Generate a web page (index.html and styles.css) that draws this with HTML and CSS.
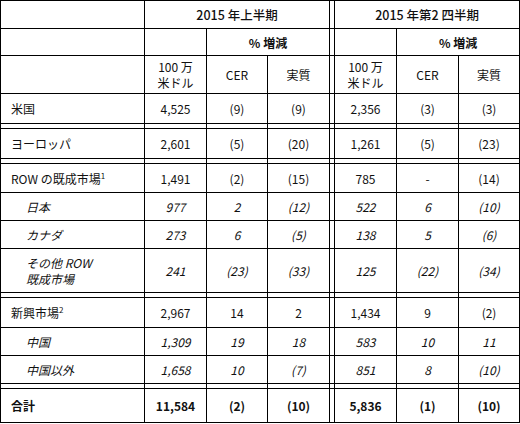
FILE: index.html
```html
<!DOCTYPE html>
<html>
<head>
    <title>2015 地域別売上</title>
    <link rel="stylesheet" href="styles.css">
</head>
<body>
    <table class="sales">
        <colgroup>
            <col class="c-label">
            <col class="c-num"><col class="c-num2"><col class="c-num">
            <col class="c-gap">
            <col class="c-num"><col class="c-num"><col class="c-num2">
        </colgroup>
        <tr class="h1">
            <td></td>
            <td colspan="3" class="period">2015 年上半期</td>
            <td class="gap"></td>
            <td colspan="3" class="period">2015 年第2 四半期</td>
        </tr>
        <tr class="h2">
            <td></td>
            <td></td>
            <td colspan="2" class="bold">% 増減</td>
            <td class="gap"></td>
            <td></td>
            <td colspan="2" class="bold">% 増減</td>
        </tr>
        <tr class="h3">
            <td></td>
            <td class="two-line">100 万<br>米ドル</td>
            <td>CER</td>
            <td>実質</td>
            <td class="gap"></td>
            <td class="two-line">100 万<br>米ドル</td>
            <td>CER</td>
            <td>実質</td>
        </tr>
        <tr class="row">
            <td class="label">米国</td>
            <td>4,525</td><td>(9)</td><td>(9)</td>
            <td class="gap"></td>
            <td>2,356</td><td>(3)</td><td>(3)</td>
        </tr>
        <tr class="spacer"><td></td><td></td><td></td><td></td><td class="gap"></td><td></td><td></td><td></td></tr>
        <tr class="row">
            <td class="label">ヨーロッパ</td>
            <td>2,601</td><td>(5)</td><td>(20)</td>
            <td class="gap"></td>
            <td>1,261</td><td>(5)</td><td>(23)</td>
        </tr>
        <tr class="spacer"><td></td><td></td><td></td><td></td><td class="gap"></td><td></td><td></td><td></td></tr>
        <tr class="row row-29">
            <td class="label">ROW の既成市場<sup>1</sup></td>
            <td>1,491</td><td>(2)</td><td>(15)</td>
            <td class="gap"></td>
            <td>785</td><td>-</td><td>(14)</td>
        </tr>
        <tr class="row sub">
            <td class="label">日本</td>
            <td>977</td><td>2</td><td>(12)</td>
            <td class="gap"></td>
            <td>522</td><td>6</td><td>(10)</td>
        </tr>
        <tr class="row sub">
            <td class="label">カナダ</td>
            <td>273</td><td>6</td><td>(5)</td>
            <td class="gap"></td>
            <td>138</td><td>5</td><td>(6)</td>
        </tr>
        <tr class="row sub tall">
            <td class="label two-line">その他 ROW<br>既成市場</td>
            <td>241</td><td>(23)</td><td>(33)</td>
            <td class="gap"></td>
            <td>125</td><td>(22)</td><td>(34)</td>
        </tr>
        <tr class="spacer"><td></td><td></td><td></td><td></td><td class="gap"></td><td></td><td></td><td></td></tr>
        <tr class="row">
            <td class="label">新興市場<sup>2</sup></td>
            <td>2,967</td><td>14</td><td>2</td>
            <td class="gap"></td>
            <td>1,434</td><td>9</td><td>(2)</td>
        </tr>
        <tr class="row sub">
            <td class="label">中国</td>
            <td>1,309</td><td>19</td><td>18</td>
            <td class="gap"></td>
            <td>583</td><td>10</td><td>11</td>
        </tr>
        <tr class="row sub">
            <td class="label">中国以外</td>
            <td>1,658</td><td>10</td><td>(7)</td>
            <td class="gap"></td>
            <td>851</td><td>8</td><td>(10)</td>
        </tr>
        <tr class="spacer"><td></td><td></td><td></td><td></td><td class="gap"></td><td></td><td></td><td></td></tr>
        <tr class="row total">
            <td class="label">合計</td>
            <td>11,584</td><td>(2)</td><td>(10)</td>
            <td class="gap"></td>
            <td>5,836</td><td>(1)</td><td>(10)</td>
        </tr>
    </table>
</body>
</html>
```

FILE: styles.css
```css
body {
    margin: 0;
    background: #fff;
    font-family: "Noto Sans CJK JP", "Noto Sans", sans-serif;
    font-size: 12px;
    color: #111;
}

.sales {
    border-collapse: collapse;
    table-layout: fixed;
    width: 520px;
}

.c-label { width: 144px; }
.c-num { width: 62px; }
.c-num2 { width: 61px; }
.c-gap { width: 5px; }

.sales td {
    border: 1px solid #000;
    padding: 0;
    text-align: center;
    vertical-align: middle;
    line-height: 15px;
}

.sales td.two-line {
    line-height: 16px;
}

.h1 td { height: 27px; }
.h2 td { height: 26px; }
.h3 td { height: 37px; }

.period {
    font-weight: 500;
    font-size: 12.5px;
}

.bold {
    font-weight: bold;
}

.row td { height: 29px; }
.row-29 td { height: 28px; }
.sub td { height: 27px; }
.tall td { height: 43px; }
.total td { height: 33px; }
.spacer td { height: 4px; }

.sales td.label {
    text-align: left;
    padding-left: 10px;
}

.sub td {
    font-style: italic;
}

.sales .sub td.label {
    padding-left: 25px;
}

.total td {
    font-weight: bold;
}

sup {
    font-size: 8px;
    line-height: 0;
    vertical-align: 5px;
}
```
